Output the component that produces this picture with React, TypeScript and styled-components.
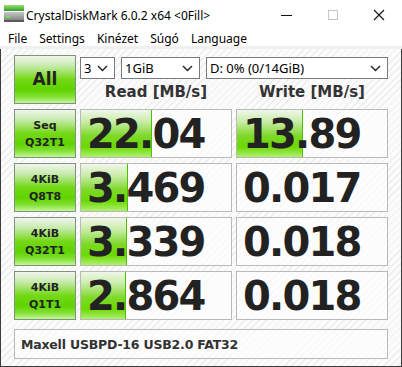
import React from "react";
import styled, { createGlobalStyle } from "styled-components";

const GlobalStyle = createGlobalStyle`
  html, body {
    margin: 0;
    padding: 0;
    background: #ffffff;
  }
`;

type Result = {
  size: string;
  mode: string;
  read: string;
  readBar: number;
  write: string;
  writeBar: number;
};

const results: Result[] = [
  { size: "Seq", mode: "Q32T1", read: "22.04", readBar: 70, write: "13.89", writeBar: 65 },
  { size: "4KiB", mode: "Q8T8", read: "3.469", readBar: 46, write: "0.017", writeBar: 0 },
  { size: "4KiB", mode: "Q32T1", read: "3.339", readBar: 45, write: "0.018", writeBar: 0 },
  { size: "4KiB", mode: "Q1T1", read: "2.864", readBar: 44, write: "0.018", writeBar: 0 },
];

const menus = ["File", "Settings", "Kinézet", "Súgó", "Language"];

function AppIcon() {
  return (
    <svg width="20" height="18" viewBox="0 0 20 18">
      <defs>
        <linearGradient id="g" x1="0" y1="0" x2="0" y2="1">
          <stop offset="0" stopColor="#9be36a" />
          <stop offset="1" stopColor="#2f9a2f" />
        </linearGradient>
        <linearGradient id="d" x1="0" y1="0" x2="0" y2="1">
          <stop offset="0" stopColor="#c8c8c8" />
          <stop offset="1" stopColor="#7d7d7d" />
        </linearGradient>
      </defs>
      <rect x="0" y="0" width="20" height="6" fill="url(#g)" />
      <rect x="0" y="7" width="20" height="9" fill="url(#d)" />
      <rect x="0" y="15" width="20" height="2" fill="#5a5a5a" />
      <rect x="2" y="11" width="4" height="2" fill="#6fe34a" />
    </svg>
  );
}

function Chevron() {
  return (
    <svg width="11" height="7" viewBox="0 0 11 7">
      <path d="M1 1 L5.5 5.5 L10 1" fill="none" stroke="#222" strokeWidth="1.4" />
    </svg>
  );
}

function Select({ value, width }: { value: string; width: number }) {
  return (
    <SelectBox $width={width}>
      <span>{value}</span>
      <Chevron />
    </SelectBox>
  );
}

function App() {
  return (
    <>
      <GlobalStyle />
      <Window>
        <TitleBar>
          <TitleLeft>
            <AppIcon />
            <Title>CrystalDiskMark 6.0.2 x64 &lt;0Fill&gt;</Title>
          </TitleLeft>
          <Controls>
            <Control>
              <svg width="12" height="12" viewBox="0 0 12 12">
                <path d="M0 6.5 H11" stroke="#111" strokeWidth="1" />
              </svg>
            </Control>
            <Control>
              <svg width="12" height="12" viewBox="0 0 12 12">
                <rect x="1.5" y="1.5" width="9" height="9" fill="none" stroke="#c4c4c4" />
              </svg>
            </Control>
            <Control>
              <svg width="12" height="12" viewBox="0 0 12 12">
                <path d="M1 1 L11 11 M11 1 L1 11" stroke="#111" strokeWidth="1.1" />
              </svg>
            </Control>
          </Controls>
        </TitleBar>
        <MenuBar>
          {menus.map((m) => (
            <MenuItem key={m}>{m}</MenuItem>
          ))}
        </MenuBar>
        <Content>
          <Grid>
            <TestButton $big>All</TestButton>
            <TopCell>
              <Selects>
                <Select value="3" width={35} />
                <Select value="1GiB" width={79} />
                <Select value="D: 0% (0/14GiB)" width={182} />
              </Selects>
              <Headers>
                <Header>Read [MB/s]</Header>
                <Header>Write [MB/s]</Header>
              </Headers>
            </TopCell>
            {results.map((r, i) => (
              <React.Fragment key={i}>
                <TestButton>
                  {r.size}
                  <br />
                  {r.mode}
                </TestButton>
                <ValueCell>
                  {r.readBar > 0 && <Bar style={{ width: r.readBar }} />}
                  <Value>{r.read}</Value>
                </ValueCell>
                <ValueCell>
                  {r.writeBar > 0 && <Bar style={{ width: r.writeBar }} />}
                  <Value>{r.write}</Value>
                </ValueCell>
              </React.Fragment>
            ))}
          </Grid>
          <Footer>Maxell USBPD-16 USB2.0 FAT32</Footer>
        </Content>
      </Window>
    </>
  );
}

const Window = styled.div`
  width: 402px;
  height: 367px;
  box-sizing: border-box;
  display: flex;
  flex-direction: column;
  background: #ffffff;
  overflow: hidden;
`;

const TitleBar = styled.div`
  height: 30px;
  display: flex;
  align-items: center;
  justify-content: space-between;
  padding-left: 4px;
  background: #ffffff;
`;

const TitleLeft = styled.div`
  display: flex;
  align-items: center;
  gap: 2px;
  svg {
    margin-top: -2px;
  }
`;

const Title = styled.span`
  font-family: "Noto Sans", sans-serif;
  font-size: 12px;
  color: #000;
`;

const Controls = styled.div`
  display: flex;
  height: 100%;
`;

const Control = styled.div`
  width: 46px;
  display: flex;
  align-items: center;
  justify-content: center;
`;

const MenuBar = styled.div`
  height: 16px;
  display: flex;
  align-items: center;
  padding-left: 2px;
  border-bottom: 3px solid #f0f0f0;
`;

const MenuItem = styled.span`
  font-family: "Noto Sans", sans-serif;
  font-size: 12px;
  color: #000;
  padding: 0 6px;
`;

const Content = styled.div`
  flex: 1;
  display: flex;
  flex-direction: column;
  gap: 9px;
  padding: 6px 13px 0 13px;
  border: 1px solid #3c3c3c;
  border-top: none;
  background-color: #fbfbfb;
  background-image: repeating-linear-gradient(
    135deg,
    #fbfbfb 0px,
    #fbfbfb 4px,
    #ededed 4px,
    #ededed 5px
  );
`;

const Grid = styled.div`
  display: grid;
  grid-template-columns: 62px 152px 152px;
  grid-template-rows: 49px repeat(4, 49px);
  column-gap: 4px;
  row-gap: 5px;
`;

const TestButton = styled.div<{ $big?: boolean }>`
  box-sizing: border-box;
  border: 1px solid #7d937d;
  display: flex;
  align-items: center;
  justify-content: center;
  text-align: center;
  font-family: "DejaVu Sans", sans-serif;
  font-weight: bold;
  font-size: ${(p) => (p.$big ? "17px" : "11px")};
  line-height: ${(p) => (p.$big ? "1" : "17px")};
  color: #222;
  background: linear-gradient(
    to bottom,
    #f2f6ee 0%,
    #c4eaa8 22%,
    #74d816 50%,
    #5fd300 72%,
    #7fe030 86%,
    #c4f59a 100%
  );
`;

const TopCell = styled.div`
  grid-column: 2 / 4;
  display: flex;
  flex-direction: column;
  padding-top: 2px;
`;

const Selects = styled.div`
  display: flex;
  gap: 6px;
`;

const SelectBox = styled.div<{ $width: number }>`
  box-sizing: border-box;
  width: ${(p) => p.$width}px;
  height: 22px;
  border: 1px solid #7a7a7a;
  background: #fff;
  display: flex;
  align-items: center;
  justify-content: space-between;
  padding: 0 6px 0 3px;
  font-family: "Noto Sans", sans-serif;
  font-size: 13px;
  color: #000;
`;

const Headers = styled.div`
  flex: 1;
  display: grid;
  grid-template-columns: 152px 152px;
  column-gap: 4px;
  align-items: center;
`;

const Header = styled.div`
  text-align: center;
  font-family: "DejaVu Sans", sans-serif;
  font-weight: bold;
  font-size: 15px;
  color: #333;
  padding-top: 1px;
`;

const ValueCell = styled.div`
  position: relative;
  box-sizing: border-box;
  border: 1px solid #b9b9b9;
  background: rgba(255, 255, 255, 0.6);
  display: flex;
  align-items: center;
  padding-left: 6px;
  overflow: hidden;
`;

const Bar = styled.div`
  position: absolute;
  left: 0;
  top: 0;
  bottom: 0;
  border-right: 1px solid #4fbf00;
  background: linear-gradient(
    to bottom,
    #f0f7ea 0%,
    #c8eca8 25%,
    #7ed82a 55%,
    #6bd800 78%,
    #aef070 100%
  );
`;

const Value = styled.span`
  position: relative;
  font-family: "DejaVu Sans", sans-serif;
  font-weight: bold;
  font-size: 40px;
  letter-spacing: -1.8px;
  color: #222;
  line-height: 1;
`;

const Footer = styled.div`
  box-sizing: border-box;
  height: 30px;
  width: 374px;
  border: 1px solid #b9b9b9;
  background: rgba(255, 255, 255, 0.6);
  display: flex;
  align-items: center;
  padding-left: 6px;
  font-family: "DejaVu Sans", sans-serif;
  font-weight: bold;
  font-size: 12.5px;
  letter-spacing: -0.2px;
  color: #333;
`;

export default App;
